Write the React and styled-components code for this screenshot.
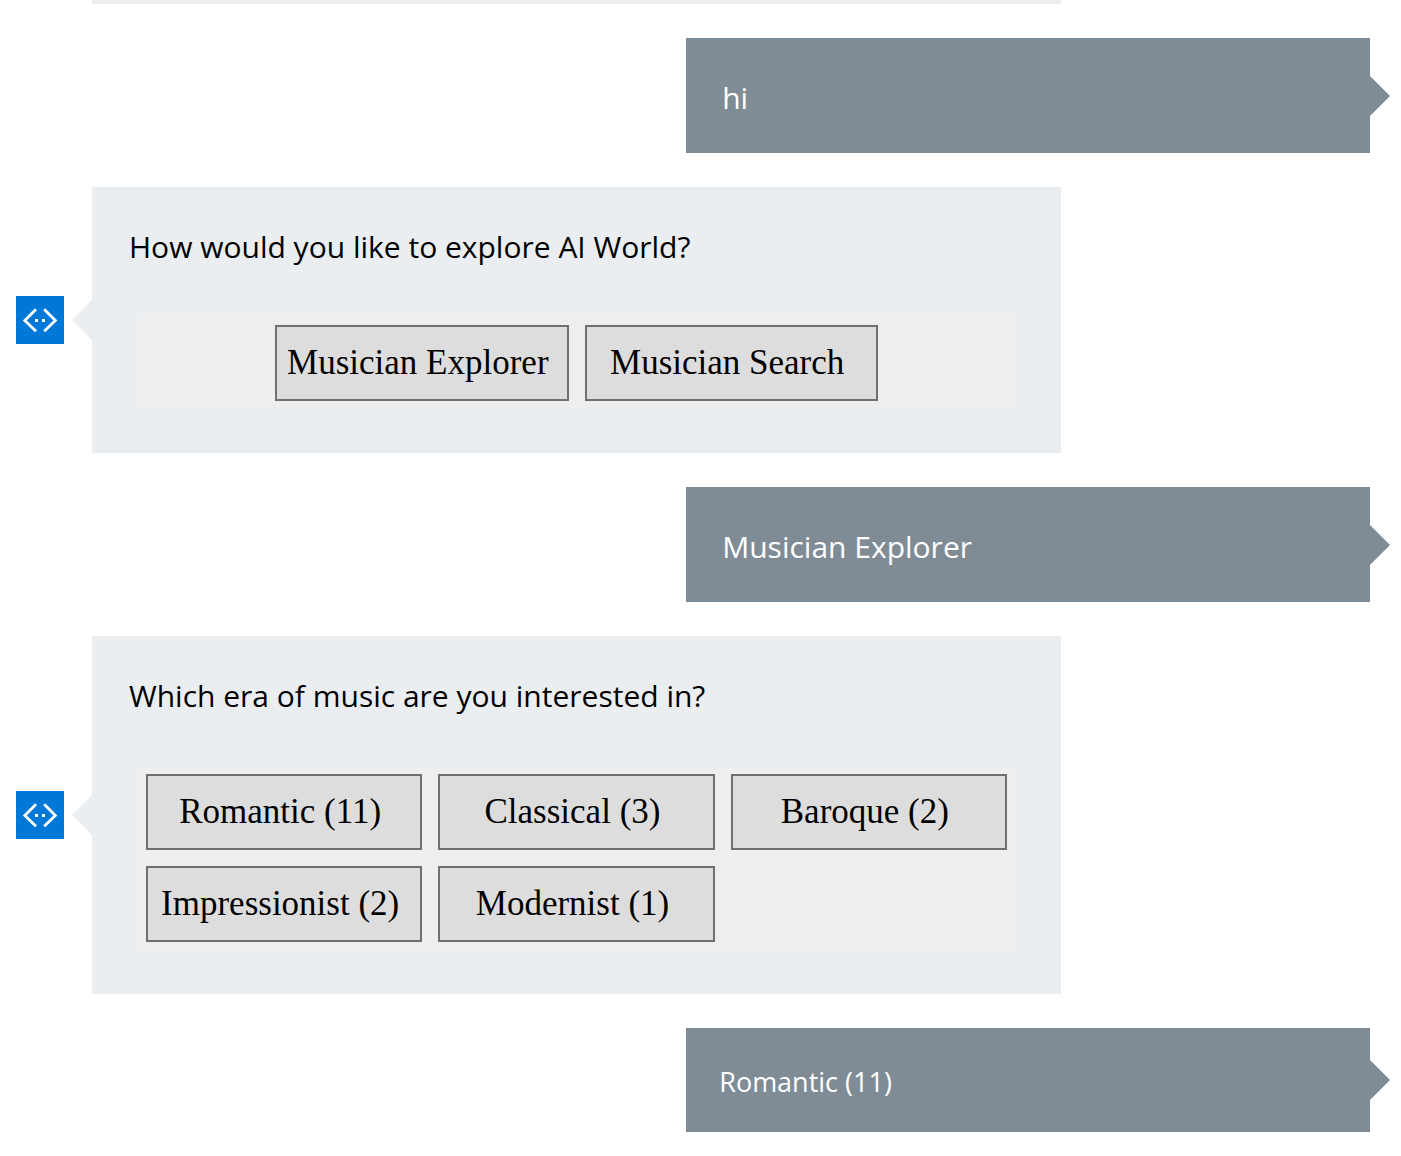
import React from 'react';
import styled, { createGlobalStyle } from 'styled-components';

const GlobalStyle = createGlobalStyle`
  *, *::before, *::after { box-sizing: border-box; }
  body {
    margin: 0;
    background: #ffffff;
    color: #000000;
    font-family: 'Segoe UI', 'Open Sans', 'Noto Sans', sans-serif;
    font-size: 30px;
    line-height: 44px;
  }
  p { margin: 0; }
`;

const Transcript = styled.main`
  display: flex;
  flex-direction: column;
  gap: 34px;
  padding: 0 31px 23px 16px;
`;

const BotRow = styled.article`
  display: grid;
  grid-template-columns: 48px minmax(0, 969fr) minmax(0, 309fr);
  column-gap: 28px;
  align-items: center;
  margin-right: -28px;
`;

const UserRow = styled.article`
  display: grid;
  grid-template-columns: minmax(0, 684fr);
  padding-left: 49.5%;
`;

const Avatar = styled.svg`
  display: block;
  width: 48px;
  height: 48px;
  background: #0078d7;
`;

const BotBubble = styled.div`
  position: relative;
  padding: 38px 45px 43px;
  background: #eaeef1;

  &::before {
    content: '';
    position: absolute;
    top: calc(50% - 20px);
    left: -20px;
    border: solid transparent;
    border-width: 20px 20px 20px 0;
    border-right-color: #eaeef1;
  }
`;

const CutBubble = styled.div`
  grid-column: 2;
  height: 4px;
  background: #eaeef1;
`;

const UserBubble = styled.div`
  position: relative;
  padding: ${({ $compact }) => ($compact ? '32px 33px 28px' : '38px 36px 33px')};
  background: #808c95;
  color: #ffffff;
  font-size: ${({ $compact }) => ($compact ? '27px' : '30px')};

  &::after {
    content: '';
    position: absolute;
    top: calc(50% - 20px);
    right: -20px;
    border: solid transparent;
    border-width: 20px 0 20px 20px;
    border-left-color: #808c95;
  }
`;

const Question = styled.p`
  margin: 0 -8px 47px;
`;

const ChoicePanel = styled.div`
  padding: 9px;
  background: #eeeeee;
`;

const ChoiceGrid = styled.div`
  display: grid;
  grid-template-columns: repeat(${({ $columns }) => $columns}, minmax(0, 1fr));
  gap: 16px;
  width: ${({ $width }) => $width || '100%'};
  margin: 0 auto;
`;

const Choice = styled.button`
  height: 76px;
  padding: 0 16px 0 8px;
  border: 2px solid #707070;
  border-radius: 0;
  background: #dddddd;
  color: #000000;
  font-family: Georgia, 'Liberation Serif', serif;
  font-size: 35px;
  line-height: 44px;
  white-space: nowrap;
  cursor: pointer;
`;

function BotMessage({ question, choices, columns, width }) {
  return (
    <BotRow>
      <Avatar viewBox="0 0 48 48" role="img" aria-label="Bot">
        <g fill="none" stroke="#ffffff" strokeWidth="2.8">
          <path d="M20 13.2 8.8 24.5 20 35.3" />
          <path d="M28.2 13.2 39.4 24.5 28.2 35.3" />
        </g>
        <g fill="#ffffff">
          <rect x="19" y="23" width="3" height="3" />
          <rect x="26" y="23" width="3" height="3" />
        </g>
      </Avatar>
      <BotBubble>
        <Question>{question}</Question>
        <ChoicePanel>
          <ChoiceGrid $columns={columns} $width={width}>
            {choices.map((choice) => (
              <Choice key={choice} type="button">{choice}</Choice>
            ))}
          </ChoiceGrid>
        </ChoicePanel>
      </BotBubble>
    </BotRow>
  );
}

function UserMessage({ text, compact }) {
  return (
    <UserRow>
      <UserBubble $compact={compact}>
        <p>{text}</p>
      </UserBubble>
    </UserRow>
  );
}

export default function App() {
  return (
    <>
      <GlobalStyle />
      <Transcript>
        <BotRow>
          <CutBubble />
        </BotRow>
        <UserMessage text="hi" />
        <BotMessage
          question="How would you like to explore AI World?"
          choices={['Musician Explorer', 'Musician Search']}
          columns={2}
          width="70%"
        />
        <UserMessage text="Musician Explorer" />
        <BotMessage
          question="Which era of music are you interested in?"
          choices={['Romantic (11)', 'Classical (3)', 'Baroque (2)', 'Impressionist (2)', 'Modernist (1)']}
          columns={3}
        />
        <UserMessage text="Romantic (11)" compact />
      </Transcript>
    </>
  );
}
